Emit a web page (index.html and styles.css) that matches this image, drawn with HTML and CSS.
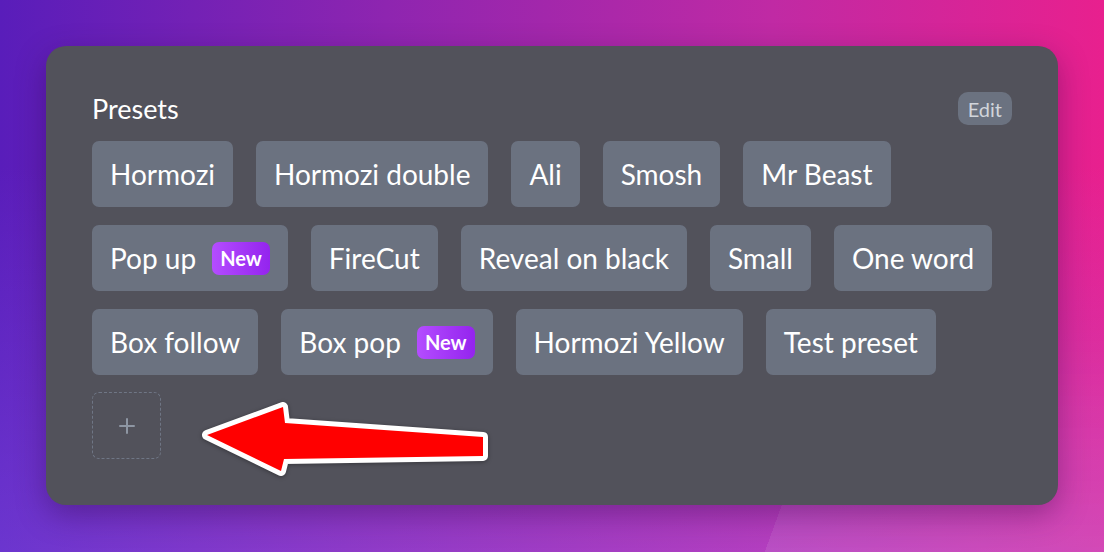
FILE: index.html
```html
<!DOCTYPE html>
<html lang="en">
<head>
    <meta charset="UTF-8">
    <meta name="viewport" content="width=device-width, initial-scale=1.0">
    <title>Presets</title>
    <link rel="stylesheet" href="styles.css">
</head>
<body>
    <div class="card">
        <div class="card-header">
            <h2 class="title">Presets</h2>
            <button class="edit-btn">Edit</button>
        </div>

        <div class="preset-list">
            <div class="preset-row">
                <button class="chip">Hormozi</button>
                <button class="chip">Hormozi double</button>
                <button class="chip">Ali</button>
                <button class="chip">Smosh</button>
                <button class="chip">Mr Beast</button>
            </div>
            <div class="preset-row">
                <button class="chip">Pop up <span class="badge">New</span></button>
                <button class="chip">FireCut</button>
                <button class="chip">Reveal on black</button>
                <button class="chip">Small</button>
                <button class="chip">One word</button>
            </div>
            <div class="preset-row">
                <button class="chip">Box follow</button>
                <button class="chip">Box pop <span class="badge">New</span></button>
                <button class="chip">Hormozi Yellow</button>
                <button class="chip">Test preset</button>
            </div>
        </div>

        <button class="add-btn" aria-label="Add preset">
            <svg width="16" height="16" viewBox="0 0 16 16">
                <path d="M8 1v14M1 8h14" stroke="#8e96a3" stroke-width="2" stroke-linecap="round"/>
            </svg>
        </button>

        <!-- annotation arrow -->
        <svg class="arrow" viewBox="190 390 310 100" width="310" height="100">
            <polygon points="207,435 283,407 285,423 483,437 483,456 284,459 281,471"
                     fill="#ff0000" stroke="#ffffff" stroke-width="10"
                     stroke-linejoin="round" paint-order="stroke"/>
        </svg>
    </div>
</body>
</html>
```

FILE: styles.css
```css
:root {
    --card-bg: #52525b;
    --chip-bg: #6b7280;
    --text-color: #ffffff;
    --muted: #d1d5db;
}

body {
    position: relative;
    margin: 0;
    height: 552px;
    padding: 46px;
    box-sizing: border-box;
    font-family: Lato, 'Open Sans', sans-serif;
    color: var(--text-color);
    background:
        linear-gradient(to bottom, rgba(140, 110, 255, 0) 30%, rgba(150, 110, 255, 0.3) 100%),
        linear-gradient(90deg, #591dba 0%, #8e25b0 35%, #c02aa4 70%, #e8208e 100%);
    overflow: hidden;
}

/* soft light sweep in the lower right */
body::before {
    content: '';
    position: absolute;
    inset: 0;
    background: linear-gradient(110deg, transparent 74%, rgba(255, 255, 255, 0.09) 74%);
    -webkit-mask-image: linear-gradient(to bottom, transparent 55%, #000 100%);
    mask-image: linear-gradient(to bottom, transparent 55%, #000 100%);
}

/* Card */
.card {
    position: relative;
    z-index: 1;
    height: 459px;
    box-sizing: border-box;
    padding: 46px 46px 0;
    background-color: var(--card-bg);
    border-radius: 20px;
    box-shadow: 0 10px 30px rgba(40, 0, 60, 0.35);
}

.card-header {
    display: flex;
    align-items: center;
    justify-content: space-between;
    margin-bottom: 16px;
}

.title {
    margin: 0;
    font-size: 27px;
    font-weight: 400;
    line-height: 33px;
}

.edit-btn {
    height: 33px;
    padding: 0 10px;
    border: none;
    border-radius: 10px;
    background-color: var(--chip-bg);
    color: var(--muted);
    font-family: inherit;
    font-size: 20px;
}

/* Preset chips */
.preset-list {
    display: flex;
    flex-direction: column;
    gap: 18px;
}

.preset-row {
    display: flex;
    gap: 23px;
}

.chip {
    display: flex;
    align-items: center;
    gap: 16px;
    height: 66px;
    padding: 0 18px;
    border: none;
    border-radius: 7px;
    background-color: var(--chip-bg);
    color: var(--text-color);
    font-family: inherit;
    font-size: 28px;
    white-space: nowrap;
}

.badge {
    display: inline-flex;
    align-items: center;
    height: 33px;
    padding: 0 8px;
    border-radius: 7px;
    background: linear-gradient(90deg, #b44dff, #9424ee);
    font-size: 20px;
    font-weight: 700;
}

/* Add button */
.add-btn {
    display: flex;
    align-items: center;
    justify-content: center;
    width: 69px;
    height: 67px;
    margin-top: 17px;
    border: 1.5px dashed #6f7685;
    border-radius: 7px;
    background: transparent;
}

/* Annotation */
.arrow {
    position: absolute;
    left: 144px;
    top: 344px;
    filter: drop-shadow(0 1px 2px rgba(0, 0, 0, 0.35));
}
```
